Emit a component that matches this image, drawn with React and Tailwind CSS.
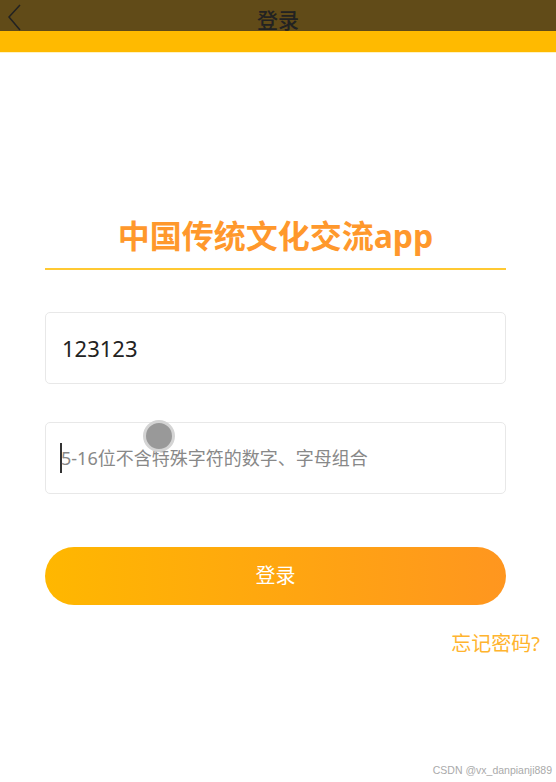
export default function App() {
  return (
    <div
      className="relative w-[556px] h-[782px] bg-white overflow-hidden"
      style={{ fontFamily: '"Noto Sans", "Noto Sans CJK SC", sans-serif' }}
    >
      {/* Header */}
      <div className="h-[53px] bg-[linear-gradient(to_bottom,#614b18_0,#614b18_31px,#ffba00_31px,#ffba00_52px,#fff3c4_52px)]">
        <div className="relative flex h-[40px] items-center justify-center">
          <svg
            className="absolute left-[6px] top-[4px]"
            width="16"
            height="28"
            viewBox="0 0 16 28"
            fill="none"
            stroke="#222"
            strokeWidth="1.5"
          >
            <path d="M14 1 L3 13 L14 26" />
          </svg>
          <span className="text-[21px] font-medium text-[#222] leading-none">登录</span>
        </div>
      </div>

      <div className="pl-[45px] pr-[50px]">
        {/* App title */}
        <h1 className="mt-[163px] text-center text-[32px] font-bold leading-[40px] text-[#ff982c]">
          中国传统文化交流app
        </h1>
        <div className="mt-[12px] h-[2px] bg-[#ffc933]" />

        {/* Account */}
        <div className="mt-[42px] flex h-[72px] items-center rounded-[5px] border border-[#e8e8e8] px-[16px]">
          <span className="text-[22px] text-[#222]">123123</span>
        </div>

        {/* Password */}
        <div className="relative mt-[38px] flex h-[72px] items-center rounded-[5px] border border-[#e8e8e8] px-[14px]">
          <span className="mr-[-1px] h-[30px] w-[2px] bg-[#333]" />
          <span className="text-[18px] text-[#888]">5-16位不含特殊字符的数字、字母组合</span>
          <span className="absolute left-[97px] top-[-3px] h-[32px] w-[32px] rounded-full border-[3px] border-[#d4d4d4] bg-[#999]" />
        </div>

        {/* Login button */}
        <button className="mt-[53px] flex h-[58px] w-full items-center justify-center rounded-full bg-[linear-gradient(to_right,#ffb700,#ff961f)] text-[20px] text-white">
          登录
        </button>

        <div className="mt-[24px] mr-[-34px] flex justify-end">
          <span className="text-[20px] text-[#ffb42e]">忘记密码?</span>
        </div>
      </div>

      <div
        className="absolute bottom-[3px] right-[4px] text-[10.5px] text-[#aaa]"
        style={{ fontFamily: '"Liberation Sans", sans-serif' }}
      >
        CSDN @vx_danpianji889
      </div>
    </div>
  );
}
